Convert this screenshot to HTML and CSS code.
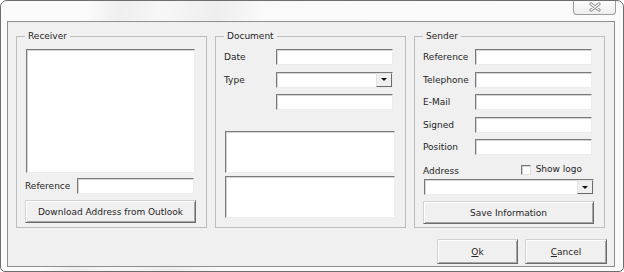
FILE: index.html
```html
<!DOCTYPE html>
<html lang="en">
<head>
<meta charset="utf-8">
<title>Letter</title>
<link rel="stylesheet" href="styles.css">
</head>
<body>
<div class="window">
  <div class="titlebar">
    <div class="close-btn">
      <svg width="12" height="10" viewBox="0 0 12 10" aria-hidden="true">
        <path d="M2 2 L10 8 M10 2 L2 8" stroke="#8d8d8d" stroke-width="3.2" stroke-linecap="round" fill="none"/>
        <path d="M2 2 L10 8 M10 2 L2 8" stroke="#fbfbfb" stroke-width="1.3" stroke-linecap="round" fill="none"/>
      </svg>
    </div>
  </div>
  <div class="client">
    <div class="frames">
      <fieldset class="frame">
        <legend>Receiver</legend>
        <div class="listbox"></div>
        <div class="field field-ref">
          <span class="lbl">Reference</span>
          <div class="input"></div>
        </div>
        <div class="btn btn-wide btn-download">Download Address from Outlook</div>
      </fieldset>

      <fieldset class="frame">
        <legend>Document</legend>
        <div class="rows">
          <div class="field"><span class="lbl">Date</span><div class="input"></div></div>
          <div class="field"><span class="lbl">Type</span><div class="select"><span class="drop"><span class="tri"></span></span></div></div>
          <div class="field"><span class="lbl"></span><div class="input"></div></div>
        </div>
        <div class="memo memo-first"></div>
        <div class="memo memo-second"></div>
      </fieldset>

      <fieldset class="frame">
        <legend>Sender</legend>
        <div class="rows">
          <div class="field"><span class="lbl">Reference</span><div class="input"></div></div>
          <div class="field"><span class="lbl">Telephone</span><div class="input"></div></div>
          <div class="field"><span class="lbl">E-Mail</span><div class="input"></div></div>
          <div class="field"><span class="lbl">Signed</span><div class="input"></div></div>
          <div class="field"><span class="lbl">Position</span><div class="input"></div></div>
        </div>
        <div class="addr-head">
          <span class="addr-label">Address</span>
          <span class="check"><span class="box"></span><span class="check-text">Show logo</span></span>
        </div>
        <div class="select select-wide"><span class="drop"><span class="tri"></span></span></div>
        <div class="btn btn-wide btn-save">Save Information</div>
      </fieldset>
    </div>
    <div class="actions">
      <div class="btn btn-ok"><u>O</u>k</div>
      <div class="btn btn-cancel"><u>C</u>ancel</div>
    </div>
  </div>
</div>
</body>
</html>
```

FILE: styles.css
```css
* { box-sizing: border-box; }

html, body {
  margin: 0;
  padding: 0;
}

body {
  width: 624px;
  height: 272px;
  overflow: hidden;
  background: #ffffff;
  font-family: "DejaVu Sans", Tahoma, Verdana, sans-serif;
  font-size: 9px;
  color: #252525;
}

.window {
  width: 624px;
  height: 272px;
  border: 1px solid #6e6e6e;
  border-radius: 7px 7px 5px 5px;
  overflow: hidden;
  display: flex;
  flex-direction: column;
  background: linear-gradient(100deg,
    #fbfbfb 0px, #fbfbfb 85px, #efefef 120px, #f7f7f7 160px,
    #eeeeee 215px, #fafafa 262px, #fbfbfb 100%);
}

.titlebar {
  height: 20px;
  flex: none;
  display: flex;
  justify-content: flex-end;
  padding-right: 7px;
}

.close-btn {
  width: 43px;
  height: 15px;
  margin-top: -1px;
  border: 1px solid #9d9d9d;
  border-top: none;
  border-radius: 0 0 4px 4px;
  background: linear-gradient(#fdfdfd, #eeeeee);
  display: flex;
  align-items: center;
  justify-content: center;
}

.client {
  margin: 0 8px 0 6px;
  height: 246px;
  border: 1px solid #8f8f8f;
  background: #f0f0f0;
  padding: 8px 0 0 8px;
  display: flex;
  flex-direction: column;
}

.frames {
  display: flex;
  gap: 8px;
}

.frame {
  width: 191px;
  height: 198px;
  margin: 0;
  padding: 7px 9px 0 9px;
  border: 1px solid #bcbcbc;
  min-width: 0;
}

.frame legend {
  padding: 0 3px;
  margin-left: -1px;
  line-height: 12px;
  font-size: 9px;
}

.listbox {
  width: 169px;
  height: 124px;
}

.listbox, .input, .memo, .select {
  background: #ffffff;
  border-style: solid;
  border-width: 1px;
  border-color: #7a7a7a #ececec #ececec #7a7a7a;
  box-shadow: inset 1px 1px 0 #d4d4d4;
}

.rows {
  display: flex;
  flex-direction: column;
  gap: 6.5px;
}

.field {
  display: flex;
  align-items: center;
  height: 16px;
}

.lbl {
  width: 52px;
  flex: none;
  margin-left: -1px;
}

.input {
  width: 117px;
  height: 16px;
}

.field-ref {
  margin-top: 5px;
}

.select {
  width: 117px;
  height: 16px;
  display: flex;
  justify-content: flex-end;
  padding: 0;
}

.select-wide {
  width: 170px;
  margin-top: 2px;
}

.drop {
  width: 16px;
  height: 100%;
  background: #f0f0f0;
  border: 1px solid;
  border-color: #e4e4e4 #6a6a6a #6a6a6a #e4e4e4;
  display: flex;
  align-items: center;
  justify-content: center;
}

.tri {
  width: 0;
  height: 0;
  border-left: 3px solid transparent;
  border-right: 3px solid transparent;
  border-top: 3px solid #111111;
}

.memo {
  width: 170px;
  height: 42px;
}

.memo-first { margin-top: 21px; }
.memo-second { margin-top: 3px; }

.addr-head {
  margin-top: 9px;
  height: 13px;
  width: 170px;
  display: flex;
  justify-content: space-between;
  align-items: flex-end;
}

.addr-label {
  line-height: 11px;
  margin-left: -1px;
}

.check {
  align-self: flex-start;
  display: flex;
  align-items: center;
  gap: 5px;
  margin-right: 12px;
}

.box {
  width: 10px;
  height: 10px;
  background: #ffffff;
  border: 1px solid;
  border-color: #7a7a7a #e2e2e2 #e2e2e2 #7a7a7a;
  box-shadow: inset 1px 1px 0 #cfcfcf;
}

.check-text { line-height: 11px; }

.btn {
  display: flex;
  align-items: center;
  justify-content: center;
  background: #f0f0f0;
  border: 1px solid;
  border-color: #d2d2d2 #6b6b6b #6b6b6b #d2d2d2;
  box-shadow: inset 1px 1px 0 #ffffff, inset -1px -1px 0 #a6a6a6;
  white-space: nowrap;
}

.btn-wide {
  width: 171px;
  height: 23px;
  margin-top: 6px;
  margin-left: -1px;
}

.actions {
  margin-top: 11px;
  display: flex;
  justify-content: flex-end;
  gap: 7px;
  padding-right: 7px;
}

.btn-ok {
  width: 81px;
  height: 25px;
}

.btn-cancel {
  width: 82px;
  height: 25px;
}

.btn u {
  text-decoration: underline;
  text-underline-offset: 1px;
}
```
